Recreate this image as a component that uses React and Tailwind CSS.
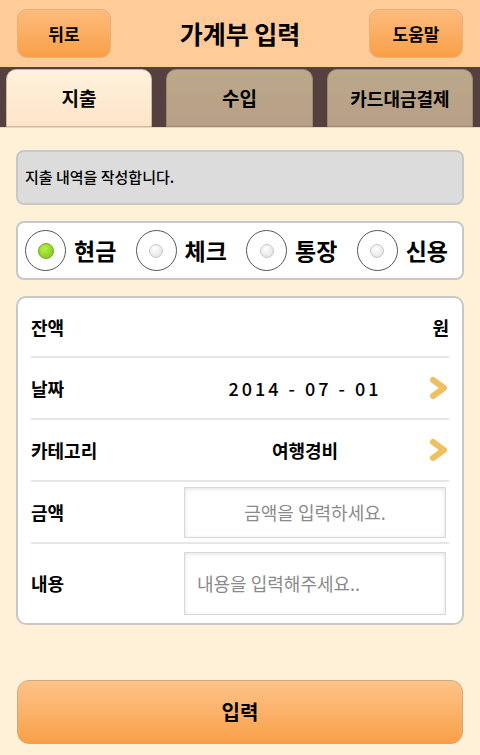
import React from "react";

const font = { fontFamily: '"Noto Sans CJK KR", "Noto Sans", sans-serif' };

function Chevron() {
  return (
    <svg width="20" height="24" viewBox="0 0 20 24" className="shrink-0">
      <path d="M4 4 L15 12 L4 20" fill="none" stroke="#efc060" strokeWidth="6" strokeLinecap="round" strokeLinejoin="round" />
    </svg>
  );
}

function Radio({ label, checked }) {
  return (
    <div className="flex items-center gap-[8px]">
      <div className="w-[41px] h-[41px] rounded-full border-[1.5px] border-[#555] bg-white flex items-center justify-center">
        {checked ? (
          <div className="w-[16px] h-[16px] rounded-full bg-[radial-gradient(circle_at_40%_35%,#b6f04a,#78c410)] border border-[#6aa818]" />
        ) : (
          <div className="w-[14px] h-[14px] rounded-full bg-[radial-gradient(circle_at_40%_35%,#ffffff,#dcdcdc)] border border-[#c8c8c8]" />
        )}
      </div>
      <span className="text-[23px] font-bold text-black leading-none">{label}</span>
    </div>
  );
}

export default function App() {
  return (
    <div style={font} className="w-[480px] h-[755px] bg-[#fff0d8] flex flex-col overflow-hidden">
      {/* header */}
      <div className="h-[67px] bg-[#ffcb98] flex items-center justify-between px-[17px] shrink-0">
        <button className="w-[94px] h-[49px] rounded-[10px] border border-[#e0b080] bg-gradient-to-b from-[#fdbb7c] to-[#f9a046] text-[17px] font-bold text-black">
          뒤로
        </button>
        <div className="text-[25px] font-bold text-black">가계부 입력</div>
        <button className="w-[94px] h-[49px] rounded-[10px] border border-[#e0b080] bg-gradient-to-b from-[#fdbb7c] to-[#f9a046] text-[17px] font-bold text-black">
          도움말
        </button>
      </div>
      {/* tabs */}
      <div className="h-[61px] bg-[#553f3f] flex items-end gap-[14px] px-[6px] shrink-0 border-b border-[#e6d6c0]">
        <div className="w-[146px] h-[58px] rounded-t-[10px] border border-[#cbb8a0] bg-gradient-to-b from-[#fff2dc] to-[#fde4c8] flex items-center justify-center text-[19px] font-bold text-black">
          지출
        </div>
        <div className="w-[147px] h-[58px] rounded-t-[10px] border border-[#9c8a70] bg-gradient-to-b from-[#bba98b] to-[#b89f86] flex items-center justify-center text-[19px] font-bold text-black">
          수입
        </div>
        <div className="w-[146px] h-[58px] rounded-t-[10px] border border-[#9c8a70] bg-gradient-to-b from-[#bba98b] to-[#b89f86] flex items-center justify-center text-[18px] font-bold text-black">
          카드대금결제
        </div>
      </div>

      <div className="flex flex-col px-[16px] pt-[22px]">
        <div className="h-[55px] rounded-[8px] border-2 border-[#c8c8c8] bg-[#dcdcdc] flex items-center px-[7px] text-[15px] font-medium text-black">
          지출 내역을 작성합니다.
        </div>

        <div className="mt-[16px] h-[59px] rounded-[8px] border-2 border-[#c8c8c8] bg-white flex items-center justify-between pl-[7px] pr-[14px]">
          <Radio label="현금" checked />
          <Radio label="체크" />
          <Radio label="통장" />
          <Radio label="신용" />
        </div>

        <div className="mt-[16px] h-[329px] rounded-[10px] border-2 border-[#c8c8c8] bg-white px-[13px] flex flex-col">
          <div className="h-[60px] flex items-center justify-between border-b-2 border-[#e6e6e6] text-[18px] font-bold text-black">
            <span>잔액</span>
            <span>원</span>
          </div>
          <div className="h-[62px] flex items-center border-b-2 border-[#e6e6e6] text-[18px] text-black">
            <span className="font-bold w-[150px]">날짜</span>
            <span className="flex-1 text-center tracking-[3px] font-medium">2014 - 07 - 01</span>
            <Chevron />
          </div>
          <div className="h-[62px] flex items-center border-b-2 border-[#e6e6e6] text-[18px] text-black">
            <span className="font-bold w-[150px]">카테고리</span>
            <span className="flex-1 text-center font-bold">여행경비</span>
            <Chevron />
          </div>
          <div className="h-[62px] flex items-center border-b-2 border-[#e6e6e6]">
            <span className="w-[153px] text-[18px] font-bold text-black">금액</span>
            <div className="w-[262px] h-[51px] border border-[#d8d8d8] bg-white shadow-[inset_0_1px_4px_rgba(0,0,0,0.12)] flex items-center justify-center text-[18px] text-[#8a8a8a]">
              금액을 입력하세요.
            </div>
          </div>
          <div className="flex-1 flex items-center">
            <span className="w-[153px] text-[18px] font-bold text-black">내용</span>
            <div className="w-[262px] h-[63px] border border-[#d8d8d8] bg-white shadow-[inset_0_1px_4px_rgba(0,0,0,0.12)] flex items-center px-[12px] text-[18px] text-[#8a8a8a]">
              내용을 입력해주세요..
            </div>
          </div>
        </div>

        <button className="mt-[55px] mx-[1px] h-[64px] rounded-[12px] border border-[#d0a880] bg-gradient-to-b from-[#fdc388] to-[#f9a046] text-[20px] font-bold text-black">
          입력
        </button>
      </div>
    </div>
  );
}
